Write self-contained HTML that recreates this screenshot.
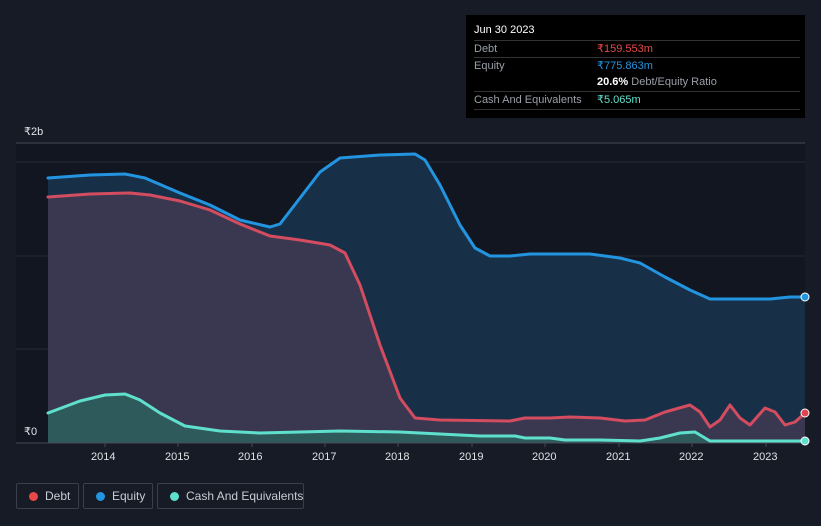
<!DOCTYPE html>
<html><head><meta charset="utf-8"><style>
body{margin:0;width:821px;height:526px;background:#161b26;font-family:"Liberation Sans",sans-serif;overflow:hidden;position:relative}
svg{position:absolute;left:0;top:0}
.tip{position:absolute;left:466px;top:15px;width:339px;height:103px;background:#000;color:#fff;font-size:11px}
.row{position:absolute;left:8px;width:326px;height:17px;line-height:17px;border-top:1px solid #333}
.l{position:absolute;left:0;color:#9a9fa8}.v{position:absolute;left:123px;white-space:nowrap}
.leg{position:absolute;top:483px;height:26px;border:1px solid #3a3f4a;border-radius:2px;color:#c9ccd2;font-size:12px;line-height:24px;box-sizing:border-box;white-space:nowrap}
.leg i{position:absolute;left:12px;top:8px;width:9px;height:9px;border-radius:50%}
.leg span{position:absolute;left:28px;top:0}
.ax{position:absolute;color:#e0e2e6;font-size:11px}
</style></head><body>
<svg width="821" height="526">
<rect x="16" y="143" width="789" height="300" fill="#121620"/>
<line x1="16" y1="143" x2="805" y2="143" stroke="#444a55"/>
<line x1="16" y1="162" x2="805" y2="162" stroke="#262b36"/>
<line x1="16" y1="256" x2="805" y2="256" stroke="#262b36"/>
<line x1="16" y1="349" x2="805" y2="349" stroke="#262b36"/>
<polygon fill="#173048" points="48,178 90,175 125,174 145,178 180,193 210,205 240,220 270,227 280,224 300,198 320,172 340,158 380,155 415,154 425,160 440,185 460,225 475,248 490,256 510,256 530,254 560,254 590,254 620,258 640,263 665,277 690,290 710,299 770,299 790,297 805,297 805,443 48,443"/>
<polygon fill="#3a3850" points="48,197 90,194 130,193 150,195 180,201 210,210 240,224 270,236 300,240 330,245 345,253 360,285 380,345 400,398 415,418 440,420 510,421 525,418 550,418 570,417 600,418 625,421 645,420 665,412 690,405 700,412 710,427 720,420 730,405 740,418 750,425 765,408 775,412 785,425 795,422 805,413 805,443 48,443"/>
<polygon fill="#2f5a5c" points="48,413 80,401 105,395 125,394 140,400 160,413 185,426 220,431 260,433 300,432 340,431 400,432 440,434 480,436 515,436 525,438 550,438 565,440 600,440 640,441 660,438 680,433 695,432 710,441 805,441 805,443 48,443"/>
<g fill="none" stroke-width="3" stroke-linejoin="round" stroke-linecap="round">
<polyline stroke="#2394e0" points="48,178 90,175 125,174 145,178 180,193 210,205 240,220 270,227 280,224 300,198 320,172 340,158 380,155 415,154 425,160 440,185 460,225 475,248 490,256 510,256 530,254 560,254 590,254 620,258 640,263 665,277 690,290 710,299 770,299 790,297 805,297"/>
<polyline stroke="#d34c5f" points="48,197 90,194 130,193 150,195 180,201 210,210 240,224 270,236 300,240 330,245 345,253 360,285 380,345 400,398 415,418 440,420 510,421 525,418 550,418 570,417 600,418 625,421 645,420 665,412 690,405 700,412 710,427 720,420 730,405 740,418 750,425 765,408 775,412 785,425 795,422 805,413"/>
<polyline stroke="#5fe0cc" points="48,413 80,401 105,395 125,394 140,400 160,413 185,426 220,431 260,433 300,432 340,431 400,432 440,434 480,436 515,436 525,438 550,438 565,440 600,440 640,441 660,438 680,433 695,432 710,441 805,441"/>
</g>
<line x1="16" y1="443" x2="805" y2="443" stroke="#444a55"/>
<g stroke="#444a55"><line x1="105" y1="443" x2="105" y2="447"/><line x1="178" y1="443" x2="178" y2="447"/><line x1="252" y1="443" x2="252" y2="447"/><line x1="325" y1="443" x2="325" y2="447"/><line x1="398" y1="443" x2="398" y2="447"/><line x1="472" y1="443" x2="472" y2="447"/><line x1="545" y1="443" x2="545" y2="447"/><line x1="619" y1="443" x2="619" y2="447"/><line x1="692" y1="443" x2="692" y2="447"/><line x1="766" y1="443" x2="766" y2="447"/></g>
<circle cx="805" cy="297" r="4" fill="#2394e0" stroke="#fff" stroke-width="1"/>
<circle cx="805" cy="413" r="4" fill="#e0454e" stroke="#fff" stroke-width="1"/>
<circle cx="805" cy="441" r="4" fill="#5fe0cc" stroke="#fff" stroke-width="1"/>
</svg>
<div class="ax" style="left:24px;top:125px">₹2b</div>
<div class="ax" style="left:24px;top:425px">₹0</div>
<div class="ax" style="left:91px;top:451px">2014</div><div class="ax" style="left:165px;top:451px">2015</div><div class="ax" style="left:238px;top:451px">2016</div><div class="ax" style="left:312px;top:451px">2017</div><div class="ax" style="left:385px;top:451px">2018</div><div class="ax" style="left:459px;top:451px">2019</div><div class="ax" style="left:532px;top:451px">2020</div><div class="ax" style="left:606px;top:451px">2021</div><div class="ax" style="left:679px;top:451px">2022</div><div class="ax" style="left:753px;top:451px">2023</div>
<div class="tip">
<div style="position:absolute;left:8px;top:9px">Jun 30 2023</div>
<div class="row" style="top:25px"><span class="l">Debt</span><span class="v" style="color:#e84848">₹159.553m</span></div>
<div class="row" style="top:42px"><span class="l">Equity</span><span class="v" style="color:#2394e0">₹775.863m</span></div>
<div class="row" style="top:59px;border-top:none"><span class="v"><b>20.6%</b> <span style="color:#9a9fa8">Debt/Equity Ratio</span></span></div>
<div class="row" style="top:76px;border-bottom:1px solid #333"><span class="l">Cash And Equivalents</span><span class="v" style="color:#5fe0cc">₹5.065m</span></div>
</div>
<div class="leg" style="left:16px;width:63px"><i style="background:#e84848"></i><span>Debt</span></div>
<div class="leg" style="left:83px;width:70px"><i style="background:#2394e0"></i><span>Equity</span></div>
<div class="leg" style="left:157px;width:147px"><i style="background:#5fe0cc"></i><span>Cash And Equivalents</span></div>
</body></html>
